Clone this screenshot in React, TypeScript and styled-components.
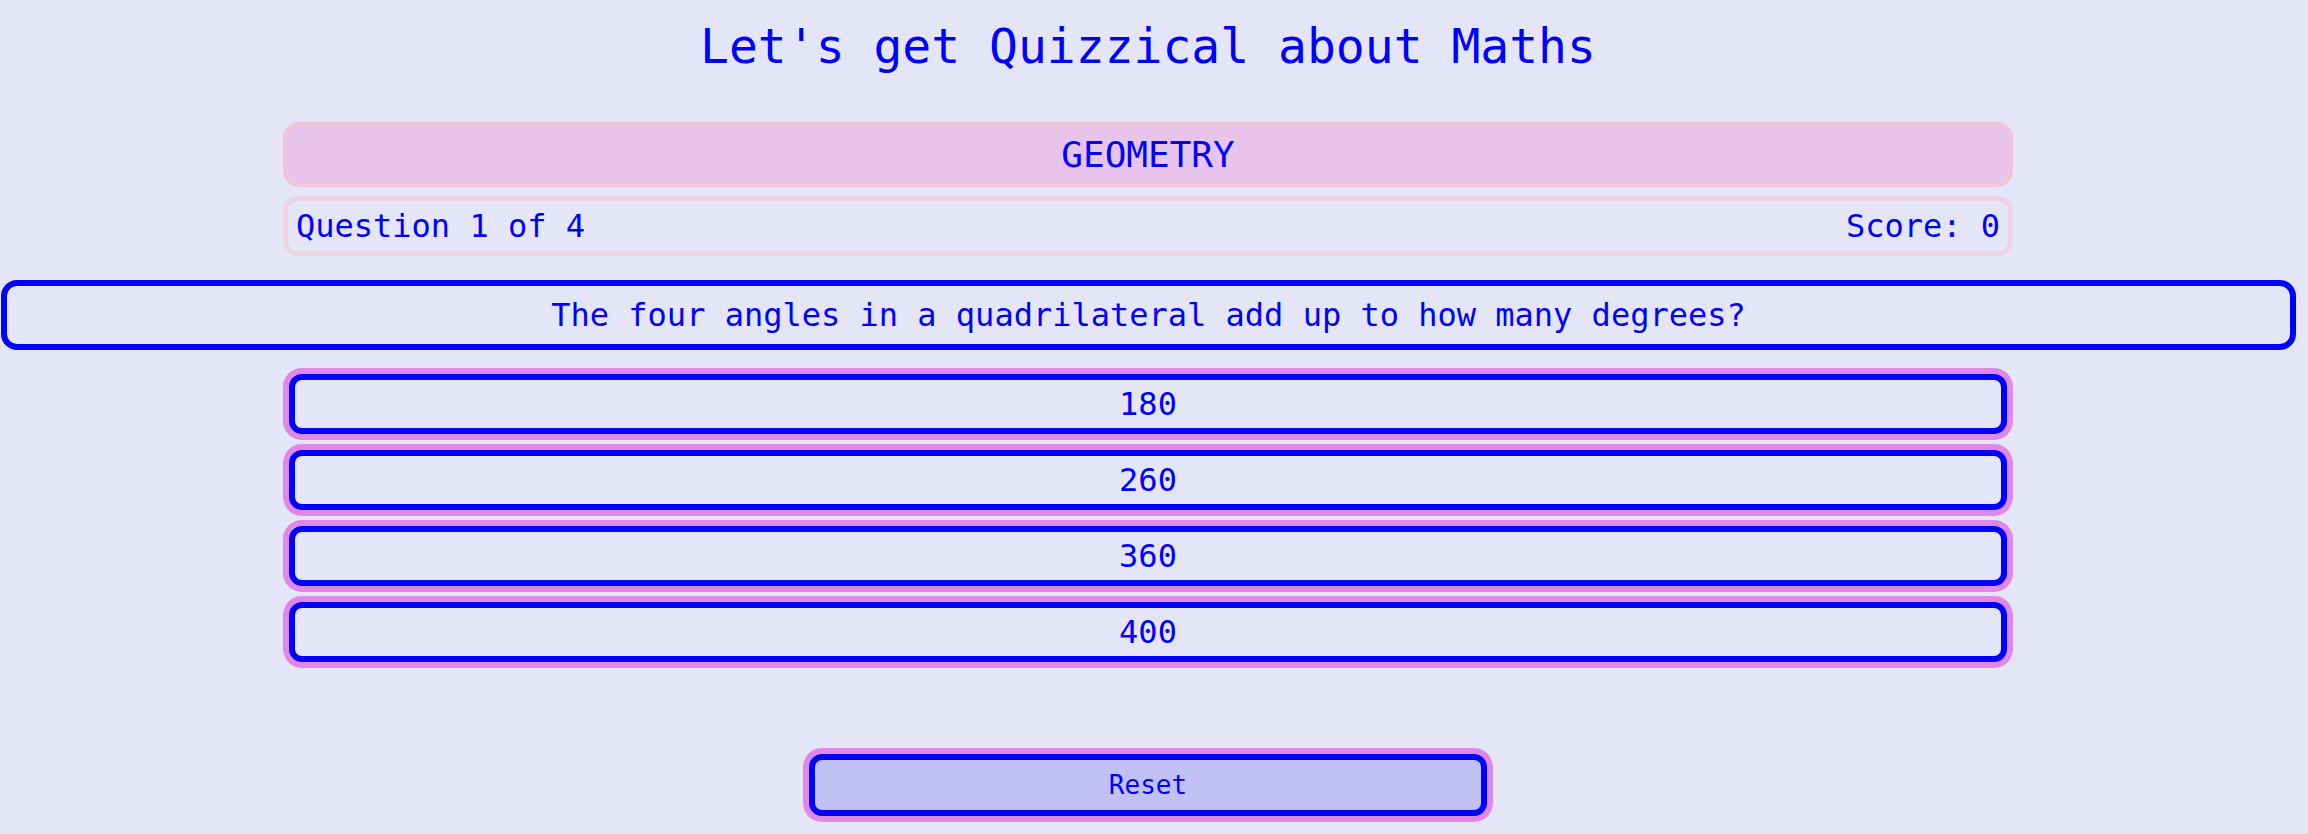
import React from "react";
import styled, { createGlobalStyle } from "styled-components";

const GlobalStyle = createGlobalStyle`
  html, body {
    margin: 0;
    padding: 0;
    background: #e5e5f8;
  }
  body {
    font-family: "DejaVu Sans Mono", "Liberation Mono", monospace;
    color: #0000ff;
  }
`;

const Page = styled.main`
  width: 2296px;
  display: flex;
  flex-direction: column;
  align-items: center;
  background: #e5e5f8;
  min-height: 834px;
`;

const Title = styled.h1`
  margin: 18px 0 0;
  font-size: 48px;
  line-height: 56px;
  font-weight: 400;
  color: #0000ff;
`;

const Column = styled.section`
  width: 1730px;
  display: flex;
  flex-direction: column;
`;

const CategoryBox = styled.div`
  box-sizing: border-box;
  margin-top: 48px;
  height: 65px;
  border: 5px solid #efc4dc;
  border-radius: 16px;
  background: #e8c4ec;
  display: flex;
  align-items: center;
  justify-content: center;
  font-size: 36px;
`;

const ScoreBar = styled.div`
  box-sizing: border-box;
  margin-top: 9px;
  height: 60px;
  border: 5px solid #eed3e5;
  border-radius: 15px;
  display: flex;
  align-items: center;
  justify-content: space-between;
  padding: 0 8px;
  font-size: 32px;
`;

const QuestionBox = styled.div`
  box-sizing: border-box;
  align-self: stretch;
  margin: 24px 0 0 1px;
  width: 2295px;
  height: 70px;
  border: 6px solid #0000ff;
  border-radius: 16px;
  display: flex;
  align-items: center;
  justify-content: center;
  font-size: 32px;
`;

const AnswerList = styled.div`
  width: 1730px;
  margin-top: 18px;
  display: flex;
  flex-direction: column;
  gap: 4px;
`;

const Button = styled.button<{ $variant?: "answer" | "reset" }>`
  box-sizing: border-box;
  margin: 6px;
  height: ${(p) => (p.$variant === "reset" ? "62px" : "60px")};
  width: ${(p) => (p.$variant === "reset" ? "678px" : "auto")};
  border: 6px solid #0000ff;
  border-radius: 13px;
  box-shadow: 0 0 0 6px #e088e8;
  background: ${(p) => (p.$variant === "reset" ? "#c0c0f4" : "#e5e5f8")};
  color: #0000ff;
  font-family: "DejaVu Sans Mono", "Liberation Mono", monospace;
  font-size: ${(p) => (p.$variant === "reset" ? "26px" : "32px")};
  display: flex;
  align-items: center;
  justify-content: center;
  padding: 0;
  cursor: pointer;
`;

const ResetWrap = styled.div`
  margin-top: 80px;
`;

const answers = ["180", "260", "360", "400"];

export default function App() {
  return (
    <>
      <GlobalStyle />
      <Page>
        <Title>Let's get Quizzical about Maths</Title>
        <Column>
          <CategoryBox>GEOMETRY</CategoryBox>
          <ScoreBar>
            <span>Question 1 of 4</span>
            <span>Score: 0</span>
          </ScoreBar>
        </Column>
        <QuestionBox>
          The four angles in a quadrilateral add up to how many degrees?
        </QuestionBox>
        <AnswerList>
          {answers.map((a) => (
            <Button key={a} $variant="answer">
              {a}
            </Button>
          ))}
        </AnswerList>
        <ResetWrap>
          <Button $variant="reset">Reset</Button>
        </ResetWrap>
      </Page>
    </>
  );
}
